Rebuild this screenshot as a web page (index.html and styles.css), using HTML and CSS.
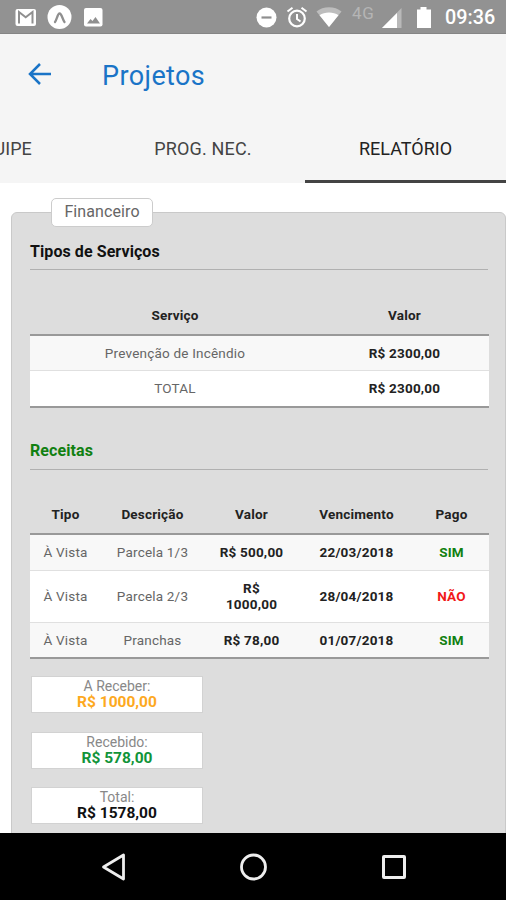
FILE: index.html
```html
<!DOCTYPE html>
<html lang="pt-BR">
<head>
<meta charset="utf-8">
<title>Projetos</title>
<link rel="stylesheet" href="styles.css">
</head>
<body>
<div class="phone">
  <div class="status">
    <svg width="110" height="34" viewBox="0 0 110 34">
      <rect x="15.5" y="9" width="20.5" height="17" rx="2" fill="#fff"/>
      <path d="M19 23.5V12l6.7 5.2 6.8-5.2v11.500" fill="none" stroke="#8f8f8f" stroke-width="2"/>
      <circle cx="59.500" cy="17" r="12" fill="#fff"/>
      <path d="M55 22c2-2.500 2.500-8.500 4.600-8.500S62.500 19.500 64.500 22" fill="none" stroke="#8f8f8f" stroke-width="2.300" stroke-linecap="round"/>
      <rect x="84" y="8" width="18.500" height="18.500" rx="2" fill="#fff"/>
      <path d="M87 23.500l3.500-4.500 2 2 3-4 4.500 6.500z" fill="#8f8f8f"/>
    </svg>
    <svg class="mid-icons" width="86" height="34" viewBox="0 0 86 34">
      <circle cx="10.500" cy="17.500" r="10" fill="#fff"/>
      <path d="M5.500 17.500h10" stroke="#8f8f8f" stroke-width="2.200"/>
      <circle cx="41" cy="18.500" r="7.800" fill="none" stroke="#fff" stroke-width="2.200"/>
      <path d="M41 14v5l3.500 2.500M31.500 11.500l5-3.800M50.500 11.500l-5-3.800" fill="none" stroke="#fff" stroke-width="2"/>
      <path d="M60.500 11.500C67 5.800 79 5.800 85.500 11.500L73 27z" fill="#bdbdbd"/>
      <path d="M63.500 15.200C68.500 11.500 77.500 11.500 82.500 15.200L73 27z" fill="#fff"/>
    </svg>
    <span class="net">4G</span>
    <svg class="right-icons" width="52" height="34" viewBox="0 0 52 34">
      <path d="M1 28L20.500 8v20z" fill="#b9b9b9"/>
      <path d="M1 28L16 13v15z" fill="#fff"/>
      <path d="M36 9.500h3.500V7h6v2.500H50V28H36z" fill="#fff"/>
    </svg>
    <span class="clock">09:36</span>
  </div>
  <header>
    <div class="toolbar">
      <svg width="24" height="24" viewBox="0 0 24 24"><path d="M23 12H2M12 2L2 12l10 10" fill="none" stroke="#1a74c7" stroke-width="2.500"/></svg>
      <h1>Projetos</h1>
    </div>
    <nav>
      <div class="tab first"><span>EQUIPE</span></div>
      <div class="tab middle"><span>PROG. NEC.</span></div>
      <div class="tab active"><span>RELATÓRIO</span></div>
    </nav>
  </header>
  <main>
    <section class="panel">
      <span class="legend">Financeiro</span>
      <h2>Tipos de Serviços</h2>
      <table class="services">
        <colgroup><col class="c-serv"><col class="c-price"></colgroup>
        <thead><tr><th>Serviço</th><th>Valor</th></tr></thead>
        <tbody>
          <tr><td>Prevenção de Incêndio</td><td class="b">R$ 2300,00</td></tr>
          <tr><td>TOTAL</td><td class="b">R$ 2300,00</td></tr>
        </tbody>
      </table>
      <h2 class="green">Receitas</h2>
      <table class="income">
        <colgroup><col class="c-type"><col class="c-desc"><col class="c-value"><col class="c-due"><col class="c-paid"></colgroup>
        <thead><tr><th>Tipo</th><th>Descrição</th><th>Valor</th><th>Vencimento</th><th>Pago</th></tr></thead>
        <tbody>
          <tr><td>À Vista</td><td>Parcela 1/3</td><td class="b">R$ 500,00</td><td class="b">22/03/2018</td><td class="b green">SIM</td></tr>
          <tr class="tall"><td>À Vista</td><td>Parcela 2/3</td><td class="b">R$<br>1000,00</td><td class="b">28/04/2018</td><td class="b red">NÃO</td></tr>
          <tr><td>À Vista</td><td>Pranchas</td><td class="b">R$ 78,00</td><td class="b">01/07/2018</td><td class="b green">SIM</td></tr>
        </tbody>
      </table>
      <div class="sums">
        <div class="sum"><span>A Receber:</span><b class="orange">R$ 1000,00</b></div>
        <div class="sum"><span>Recebido:</span><b class="emerald">R$ 578,00</b></div>
        <div class="sum"><span>Total:</span><b>R$ 1578,00</b></div>
      </div>
    </section>
  </main>
  <footer>
    <svg width="26" height="30" viewBox="0 0 26 30"><path d="M22.500 3v24L2.500 15z" fill="none" stroke="#eee" stroke-width="2.800" stroke-linejoin="round"/></svg>
    <svg width="30" height="30" viewBox="0 0 30 30"><circle cx="14.500" cy="15" r="12" fill="none" stroke="#eee" stroke-width="2.800"/></svg>
    <svg width="26" height="30" viewBox="0 0 26 30"><rect x="2.500" y="4.500" width="21" height="21" rx=".5" fill="none" stroke="#eee" stroke-width="3"/></svg>
  </footer>
</div>
</body>
</html>
```
FILE: styles.css
```css
* { box-sizing: border-box; }
body { margin: 0; font-family: Roboto, "Liberation Sans", sans-serif; color: #111; }
.phone { width: 506px; height: 900px; display: flex; flex-direction: column; overflow: hidden; background: #fff; }
.status { height: 34px; flex: none; display: flex; background: #929292; border-bottom: 1px solid #858585; }
.status svg { flex: none; }
.mid-icons { margin-left: 146px; }
.net { width: 25px; margin-left: 10px; font-size: 17px; line-height: 27px; color: #b5b5b5; font-weight: 400; letter-spacing: .8px; }
.right-icons { margin-left: 4px; }
.clock { margin-left: 12px; color: #fff; font-size: 19.8px; font-weight: 500; line-height: 36px; white-space: nowrap; }
header { height: 149px; flex: none; background: #f5f5f5; }
.toolbar { height: 81px; display: flex; align-items: center; padding-left: 28px; }
.toolbar svg { margin-top: -2px; }
h1 { margin: 2px 0 0 50px; font-size: 27px; font-weight: 400; color: #1a74c7; letter-spacing: .4px; }
nav { display: flex; height: 68px; }
.tab { height: 68px; font-size: 18px; line-height: 67px; color: #444; white-space: nowrap; text-align: center; }
.first { width: 102px; text-align: left; }
.first span { margin-left: -29px; }
.middle { width: 203px; padding-right: 1px; letter-spacing: .15px; }
.active { width: 201px; color: #222; border-bottom: 3px solid #444; }
main { flex: 1; min-height: 0; overflow: hidden; padding: 29px 0 0 11px; }
.panel { width: 495px; height: 660px; padding: 0 17px 0 18px; background: #ddd; border: 1px solid #c9c9c9; border-radius: 6px; display: flex; flex-direction: column; }
.legend { width: 102px; height: 29px; flex: none; margin: -15px 0 0 21px; border: 1px solid #ccc; border-radius: 5px; background: #fff; color: #666; font-size: 16px; line-height: 26px; letter-spacing: .1px; text-align: center; white-space: nowrap; }
h2 { margin: 11px 0 0; height: 32px; flex: none; border-bottom: 1px solid #b0b0b0; font-size: 16px; line-height: 28px; font-weight: 700; letter-spacing: .08px; }
h2.green { margin-top: 29px; height: 33px; }
table { width: 459px; flex: none; table-layout: fixed; border-collapse: collapse; font-size: 13.5px; line-height: 16px; letter-spacing: .2px; text-align: center; color: #666; }
.services { margin-top: 24px; }
.income { margin-top: 23px; }
th, td { padding: 0; }
th { height: 41px; padding-top: 2px; color: #222; font-weight: 700; }
tbody tr { background: #f8f8f8; height: 36px; border-top: 1px solid #e0e0e0; }
tbody tr:nth-child(2) { background: #fff; }
tbody tr:first-child { border-top: 2px solid #999; }
tbody tr:last-child { border-bottom: 2px solid #999; }
.services tbody tr:first-child { height: 35px; }
.services tbody tr:last-child { height: 37px; }
.income .tall { height: 52px; }
.b { font-weight: 700; color: #222; }
.c-serv { width: 290px; }
.c-price { width: 169px; }
.c-type { width: 71px; }
.c-desc { width: 103px; }
.c-value { width: 95px; }
.c-due { width: 115px; }
.c-paid { width: 75px; }
.green, .b.green { color: #118011; }
.b.red { color: #f21818; }
.sums { display: flex; flex-direction: column; gap: 18.5px; margin: 17px 0 0 1px; }
.sum { width: 172px; height: 37px; display: flex; flex-direction: column; align-items: center; background: #fff; border: 1px solid #d2d2d2; font-size: 14px; line-height: 16px; color: #888; padding-top: 1px; }
.sum b { color: #111; font-size: 15.500px; line-height: 16px; }
.sum .orange { color: #fda91e; }
.sum .emerald { color: #119439; }
footer { height: 67px; flex: none; background: #000; display: flex; align-items: center; padding-left: 101px; }
footer svg:nth-child(2) { margin-left: 112px; }
footer svg:nth-child(3) { margin-left: 112px; }
```
